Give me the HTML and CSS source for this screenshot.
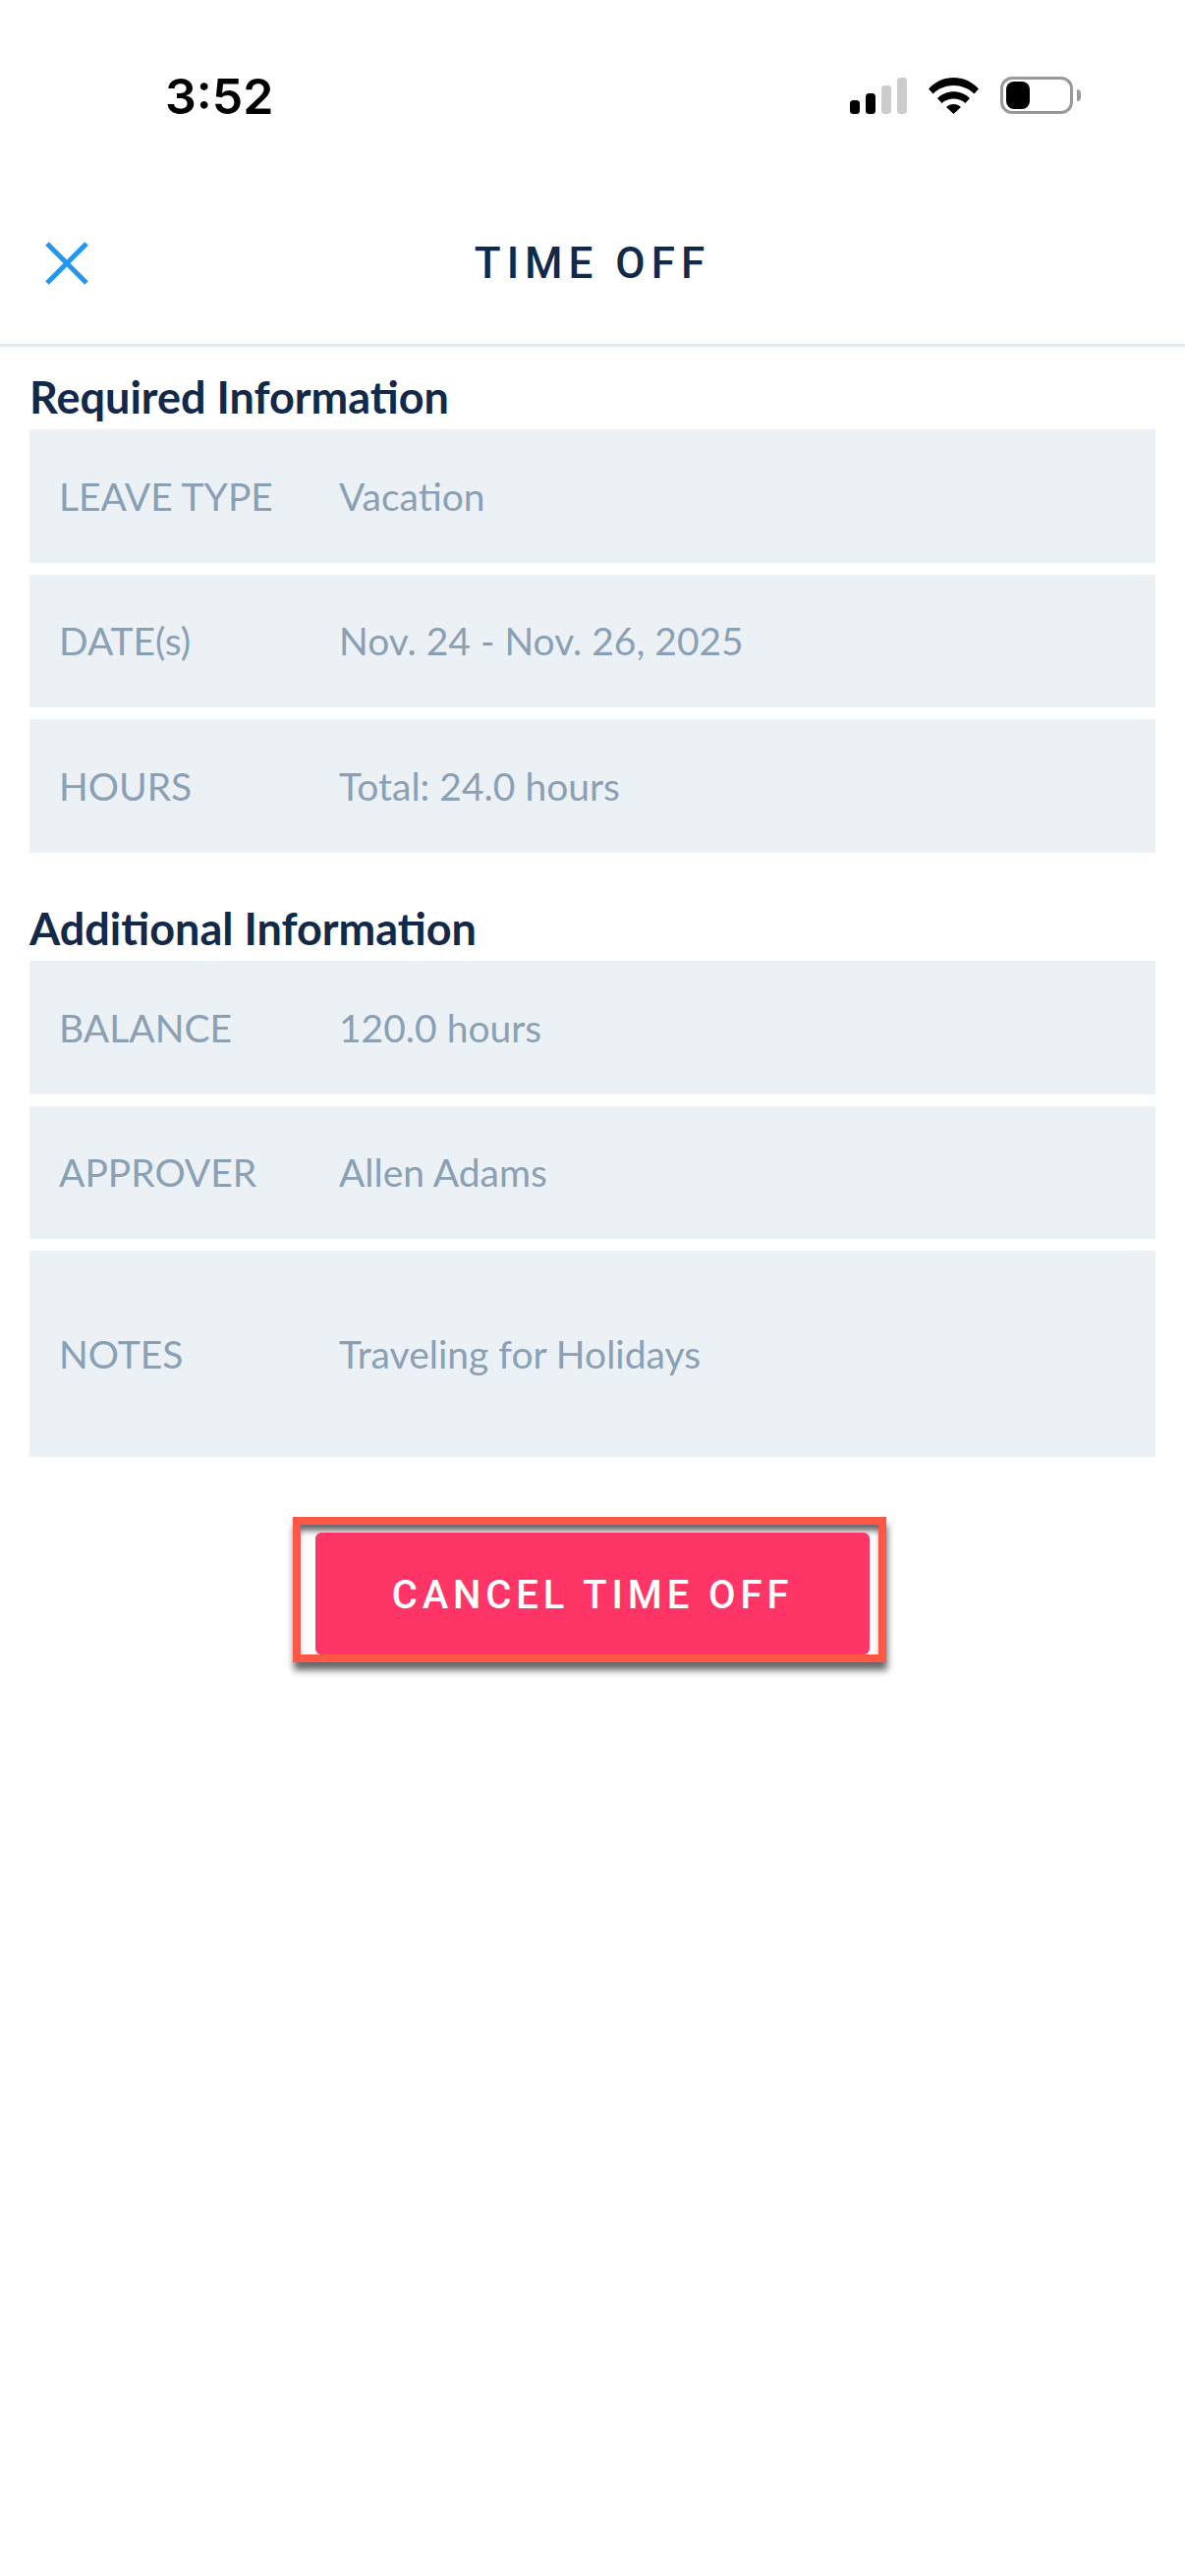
FILE: index.html
```html
<!DOCTYPE html>
<html>
<head>
  <title>Time Off</title>
  <link rel="stylesheet" href="styles.css">
</head>
<body>
  <div class="status-bar">
    <span class="clock">3:52</span>
    <div class="status-icons">
      <svg class="signal" width="58" height="37" viewBox="0 0 58 37">
        <rect x="0" y="23" width="10" height="14" rx="3.5" fill="#000"/>
        <rect x="16" y="16" width="10" height="21" rx="3.5" fill="#000"/>
        <rect x="32" y="8" width="10" height="29" rx="3.5" fill="#ccc"/>
        <rect x="48" y="0" width="10" height="37" rx="3.5" fill="#ccc"/>
      </svg>
      <svg class="wifi" width="51" height="37" viewBox="0 0 51 37">
        <path d="M0 11.5 C14 -3.8 37 -3.8 51 11.5 L46.5 16.5 C35 5 16 5 4.5 16.5 Z" fill="#000"/>
        <path d="M9 21 C18 12 33 12 42 21 L37.5 26 C31 20 20 20 13.5 26 Z" fill="#000"/>
        <path d="M18 30 C22 26 29 26 33 30 L25.5 37 Z" fill="#000"/>
      </svg>
      <div class="battery">
        <div class="battery-body"><div class="battery-fill"></div></div>
        <div class="battery-nub"></div>
      </div>
    </div>
  </div>

  <div class="nav-bar">
    <svg class="close-icon" width="44" height="44" viewBox="0 0 44 44">
      <path d="M2 2 L42 42 M42 2 L2 42" stroke="#2196f3" stroke-width="5" fill="none"/>
    </svg>
    <h1 class="nav-title">TIME OFF</h1>
  </div>

  <div class="content">
    <h2 class="section-title">Required Information</h2>
    <div class="row"><span class="row-label">LEAVE TYPE</span><span class="row-value">Vacation</span></div>
    <div class="row"><span class="row-label">DATE(s)</span><span class="row-value">Nov. 24 - Nov. 26, 2025</span></div>
    <div class="row"><span class="row-label">HOURS</span><span class="row-value">Total: 24.0 hours</span></div>

    <h2 class="section-title section-second">Additional Information</h2>
    <div class="row"><span class="row-label">BALANCE</span><span class="row-value">120.0 hours</span></div>
    <div class="row"><span class="row-label">APPROVER</span><span class="row-value">Allen Adams</span></div>
    <div class="row row-tall"><span class="row-label">NOTES</span><span class="row-value">Traveling for Holidays</span></div>
  </div>

  <div class="button-wrap">
    <div class="highlight">
      <button class="cancel-btn">CANCEL TIME OFF</button>
    </div>
  </div>
</body>
</html>
```

FILE: styles.css
```css
body {
  margin: 0;
  background: #fff;
  font-family: Lato, sans-serif;
  font-feature-settings: "liga" 1, "dlig" 1;
  height: 2622px;
  overflow: hidden;
}
.status-bar {
  height: 196px;
  padding: 72px 106px 0 168px;
  box-sizing: border-box;
  display: flex;
  justify-content: space-between;
  align-items: flex-start;
}
.clock {
  font-family: Inter, sans-serif;
  font-size: 50px;
  font-weight: 600;
  line-height: 52px;
  color: #000;
}
.status-icons {
  display: flex;
  align-items: flex-start;
  padding-top: 7px;
}
.signal {
  margin-right: 22px;
}
.wifi {
  margin-right: 22px;
}
.battery {
  display: flex;
  align-items: center;
  margin-top: -1px;
}
.battery-body {
  width: 74px;
  height: 38px;
  box-sizing: border-box;
  border: 3px solid #999;
  border-radius: 12px;
  padding: 2px 3px;
}
.battery-fill {
  width: 24px;
  height: 28px;
  background: #000;
  border-radius: 8px;
}
.battery-nub {
  width: 4px;
  height: 12px;
  margin-left: 4px;
  background: #999;
  border-radius: 0 6px 6px 0;
}
.nav-bar {
  height: 157px;
  box-sizing: border-box;
  border-bottom: 3px solid #e1e9f0;
  position: relative;
  display: flex;
  align-items: center;
  justify-content: center;
  padding-bottom: 10px;
}
.close-icon {
  position: absolute;
  left: 46px;
  top: 50px;
}
.nav-title {
  margin: 0;
  font-family: Roboto, sans-serif;
  font-size: 44px;
  font-weight: 500;
  letter-spacing: 6px;
  color: #12294a;
}
.content {
  padding: 0 30px;
}
.section-title {
  margin: 0;
  height: 84px;
  line-height: 103px;
  font-size: 45px;
  font-weight: 700;
  color: #12294a;
}
.section-second {
  height: 98.5px;
  line-height: 131px;
}
.row {
  height: 135.5px;
  margin-bottom: 12px;
  background: #ecf1f6;
  display: flex;
  align-items: center;
  padding-left: 30px;
  font-size: 39px;
  color: #8aa0b5;
}
.row-tall {
  height: 210px;
  margin-bottom: 0;
}
.row-label {
  width: 285px;
}
.button-wrap {
  display: flex;
  justify-content: center;
  padding: 61px 6px 0 0;
}
.highlight {
  width: 604px;
  height: 148px;
  box-sizing: border-box;
  border: 8px solid #ff5745;
  box-shadow: 1px 8px 7px rgba(0, 0, 0, 0.6), inset 0 8px 6px -2px rgba(0, 0, 0, 0.6);
  padding: 8px 9px 0 15px;
}
.cancel-btn {
  display: block;
  width: 100%;
  height: 124px;
  padding: 3px 0 0;
  border: 0;
  border-radius: 6px;
  background: #ff3568;
  color: #fff;
  font-family: Roboto, sans-serif;
  font-size: 40px;
  font-weight: 500;
  letter-spacing: 4.9px;
}
```
